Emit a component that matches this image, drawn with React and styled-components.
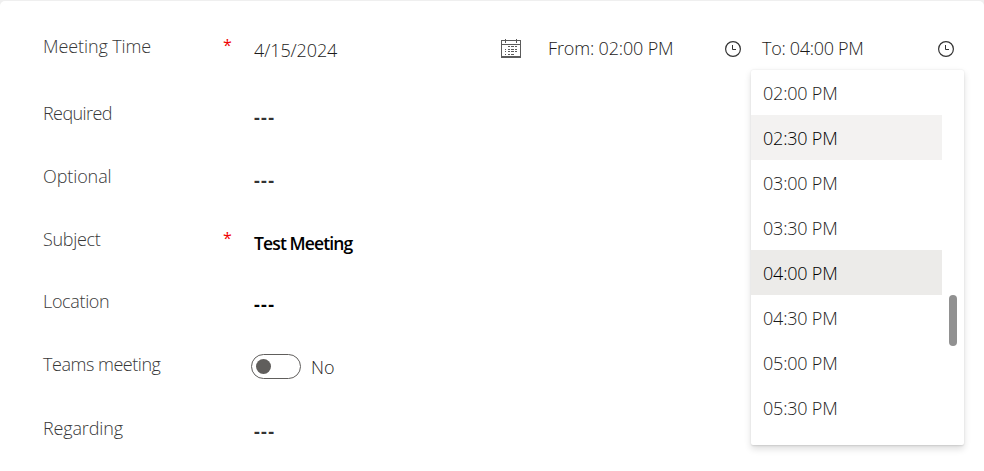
import React from "react";
import styled, { createGlobalStyle, css } from "styled-components";

const GlobalStyle = createGlobalStyle`
  *, *::before, *::after { box-sizing: border-box; }
  body { margin: 0; background: #efefef; overflow: hidden; }
`;

const Page = styled.main`
  height: 471px;
  border-top: 1px solid #efefef;
  background: #efefef;
  font-family: "Open Sans", "Noto Sans", sans-serif;
  font-size: 18px;
  font-weight: 300;
  line-height: 24px;
  color: #1c1b1a;
  white-space: nowrap;
`;

const Form = styled.form`
  height: 470px;
  padding: 14px 20px 0 43px;
  background: #fff;
  border-radius: 5px 5px 0 0;
`;

const Row = styled.div`
  display: grid;
  grid-template-columns: 179px 32px 1fr;
  height: ${(p) => p.$height || 63}px;
  padding-top: 19px;
`;

const Label = styled.label`
  color: #383838;
  letter-spacing: ${(p) => p.$spacing || 0}px;
`;

const Required = styled.span`
  padding-left: 1px;
  color: #f00000;
  font-size: 16px;
  font-weight: 400;
  line-height: 22px;
`;

const Value = styled.div`
  display: flex;
  align-items: center;
  height: 24px;
  margin-top: ${(p) => p.$drop || 4}px;
`;

const Dashes = styled.span`
  font-weight: 700;
  letter-spacing: 1.3px;
  color: ${(p) => p.$color || "#333"};
`;

const Subject = styled.span`
  font-weight: 600;
  font-size: 17.5px;
  color: #000;
  letter-spacing: -0.87px;
`;

const DateTime = styled.div`
  display: grid;
  grid-template-columns: 294px 214px 1fr;
  align-items: start;
`;

const Picker = styled.div`
  position: relative;
  display: flex;
  justify-content: space-between;
  align-items: center;
  height: 24px;
  margin-top: ${(p) => p.$drop}px;
  padding-right: ${(p) => p.$end}px;
`;

const Text = styled.span`
  letter-spacing: ${(p) => p.$spacing || 0}px;
`;

const Icon = styled.svg`
  display: block;
  flex: none;
  fill: none;
  margin-top: ${(p) => p.$shift}px;
`;

const Menu = styled.div`
  position: absolute;
  top: 34px;
  left: -11px;
  z-index: 1;
  display: flex;
  width: 213px;
  height: 375px;
  background: #fff;
  border-radius: 2px;
  box-shadow: 0 3.2px 7.2px rgba(0, 0, 0, 0.132), 0 0.6px 1.8px rgba(0, 0, 0, 0.108);
`;

const Options = styled.ul`
  width: 191px;
  margin: 0;
  padding: 0;
  list-style: none;
`;

const Option = styled.li`
  height: 45px;
  padding: 0 12px;
  line-height: 47px;
  ${(p) => p.$state === "hover" && css`background: #f3f2f1; color: #000;`}
  ${(p) => p.$state === "selected" && css`background: #ecebe9; color: #000;`}
`;

const Thumb = styled.div`
  width: 8px;
  height: 51px;
  margin: 225px 0 0 7px;
  border-radius: 4px;
  background: #919191;
`;

const Toggle = styled.span`
  display: flex;
  align-items: center;
  width: 50px;
  height: 25px;
  margin: -2px 10px 0 -3px;
  padding-left: 4px;
  border: 1px solid #605e5c;
  border-radius: 13px;
  &::before {
    content: "";
    width: 15px;
    height: 15px;
    border-radius: 50%;
    background: #605e5c;
  }
`;

const Clock = () => (
  <Icon $shift={2} width="16" height="16" viewBox="0 0 16 16" stroke="#333">
    <circle cx="8" cy="8" r="7.4" strokeWidth="1.2" />
    <path d="M7.5 4v4.5H11" />
  </Icon>
);

const Calendar = () => (
  <Icon $shift={-3} width="20" height="19" viewBox="0 0 20 19" stroke="#5b5b5b" shapeRendering="crispEdges">
    <path d="M.5 1v18M19.5 1v18M0 1.5h20M0 5.5h20M4.5 0v4M15.5 0v4" />
    <path d="M0 18h20" strokeWidth="2" />
    <path d="M7 7.5h2M10 7.5h3M14 7.5h2M4 10.5h1M7 10.5h2M10 10.5h3M14 10.5h2M4 12.5h1M7 12.5h2M10 12.5h3M14 12.5h2M4 15.5h1M7 15.5h2M10 15.5h3" />
  </Icon>
);

const times = [
  ["02:00 PM"],
  ["02:30 PM", "hover"],
  ["03:00 PM"],
  ["03:30 PM"],
  ["04:00 PM", "selected"],
  ["04:30 PM"],
  ["05:00 PM"],
  ["05:30 PM"],
];

export default function App() {
  return (
    <>
      <GlobalStyle />
      <Page>
        <Form>
          <Row $height={67}>
            <Label $spacing={-0.1}>Meeting Time</Label>
            <Required>*</Required>
            <DateTime>
              <Picker $drop={4} $end={27}>
                <Text $spacing={-0.1}>4/15/2024</Text>
                <Calendar />
              </Picker>
              <Picker $drop={2} $end={21}>
                <Text $spacing={-0.15}>From: 02:00 PM</Text>
                <Clock />
              </Picker>
              <Picker $drop={2} $end={10}>
                <Text $spacing={-0.3}>To: 04:00 PM</Text>
                <Clock />
                <Menu>
                  <Options>
                    {times.map(([time, state]) => (
                      <Option key={time} $state={state}>
                        <Text $spacing={-0.2}>{time}</Text>
                      </Option>
                    ))}
                  </Options>
                  <Thumb />
                </Menu>
              </Picker>
            </DateTime>
          </Row>
          <Row>
            <Label $spacing={-0.6}>Required</Label>
            <span />
            <Value><Dashes>---</Dashes></Value>
          </Row>
          <Row>
            <Label $spacing={-0.1}>Optional</Label>
            <span />
            <Value><Dashes>---</Dashes></Value>
          </Row>
          <Row $height={62}>
            <Label $spacing={-0.3}>Subject</Label>
            <Required>*</Required>
            <Value $drop={4}><Subject>Test Meeting</Subject></Value>
          </Row>
          <Row>
            <Label $spacing={-0.35}>Location</Label>
            <span />
            <Value $drop={3}><Dashes $color="#000">---</Dashes></Value>
          </Row>
          <Row $height={64}>
            <Label $spacing={-0.47}>Teams meeting</Label>
            <span />
            <Value $drop={3}><Toggle /><Text>No</Text></Value>
          </Row>
          <Row>
            <Label $spacing={-0.15}>Regarding</Label>
            <span />
            <Value $drop={3}><Dashes>---</Dashes></Value>
          </Row>
        </Form>
      </Page>
    </>
  );
}
